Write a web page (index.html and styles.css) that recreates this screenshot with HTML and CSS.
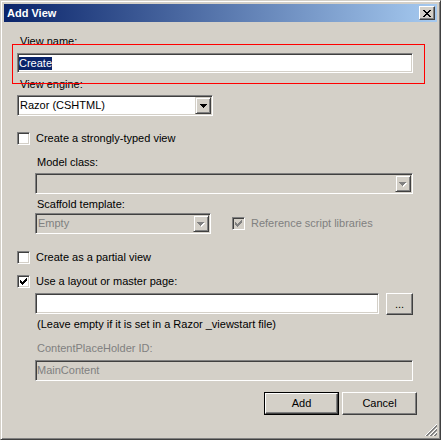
FILE: index.html
```html
<!DOCTYPE html>
<html>
<head>
<meta charset="utf-8">
<title>Add View</title>
<link rel="stylesheet" href="styles.css">
</head>
<body>
<div class="window">
  <div class="titlebar">
    <span class="title">Add View</span>
    <span class="close raised-btn">
      <svg width="8" height="7" viewBox="0 0 8 7" shape-rendering="crispEdges"><path fill="#000" d="M0 0h2v1h-2z M6 0h2v1h-2z M1 1h2v1h-2z M5 1h2v1h-2z M2 2h4v1h-4z M3 3h2v1h-2z M2 4h4v1h-4z M1 5h2v1h-2z M5 5h2v1h-2z M0 6h2v1h-2z M6 6h2v1h-2z"/></svg>
    </span>
  </div>
  <div class="content">
    <div class="lbl lbl-first">View name:</div>
    <div class="field field-name"><span class="sel">Create</span></div>
    <div class="lbl lbl-gap5">View engine:</div>
    <div class="combo combo-engine">
      <span class="combo-text">Razor (CSHTML)</span>
      <span class="drop"><svg width="7" height="4" viewBox="0 0 7 4" shape-rendering="crispEdges"><path fill="#000" d="M0 0h7v1h-7z M1 1h5v1h-5z M2 2h3v1h-3z M3 3h1v1h-1z"/></svg></span>
    </div>
    <div class="check-row row-typed"><span class="cb"></span><span>Create a strongly-typed view</span></div>
    <div class="indent">
      <div class="lbl lbl-model">Model class:</div>
      <div class="combo disabled combo-model">
        <span class="combo-text"></span>
        <span class="drop"><svg width="8" height="5" viewBox="0 0 8 5" shape-rendering="crispEdges"><path fill="#fff" d="M1 1h7v1h-7z M2 2h5v1h-5z M3 3h3v1h-3z M4 4h1v1h-1z"/><path fill="#808080" d="M0 0h7v1h-7z M1 1h5v1h-5z M2 2h3v1h-3z M3 3h1v1h-1z"/></svg></span>
      </div>
      <div class="lbl lbl-scaffold">Scaffold template:</div>
      <div class="scaffold-row">
        <div class="combo disabled combo-scaffold">
          <span class="combo-text">Empty</span>
          <span class="drop"><svg width="8" height="5" viewBox="0 0 8 5" shape-rendering="crispEdges"><path fill="#fff" d="M1 1h7v1h-7z M2 2h5v1h-5z M3 3h3v1h-3z M4 4h1v1h-1z"/><path fill="#808080" d="M0 0h7v1h-7z M1 1h5v1h-5z M2 2h3v1h-3z M3 3h1v1h-1z"/></svg></span>
        </div>
        <div class="check-row disabled"><span class="cb cb-disabled"><svg width="7" height="7" viewBox="0 0 7 7" shape-rendering="crispEdges"><path fill="#808080" d="M6 0h1v1h-1z M5 1h2v1h-2z M0 2h1v1h-1z M4 2h3v1h-3z M0 3h2v1h-2z M3 3h3v1h-3z M0 4h5v1h-5z M1 5h3v1h-3z M2 6h1v1h-1z"/></svg></span><span>Reference script libraries</span></div>
      </div>
    </div>
    <div class="check-row row-partial"><span class="cb"></span><span>Create as a partial view</span></div>
    <div class="check-row row-layout"><span class="cb"><svg width="7" height="7" viewBox="0 0 7 7" shape-rendering="crispEdges"><path fill="#000" d="M6 0h1v1h-1z M5 1h2v1h-2z M0 2h1v1h-1z M4 2h3v1h-3z M0 3h2v1h-2z M3 3h3v1h-3z M0 4h5v1h-5z M1 5h3v1h-3z M2 6h1v1h-1z"/></svg></span><span>Use a layout or master page:</span></div>
    <div class="indent">
      <div class="layout-row">
        <div class="field field-layout"></div>
        <span class="btn btn-browse">...</span>
      </div>
      <div class="lbl lbl-hint">(Leave empty if it is set in a Razor _viewstart file)</div>
      <div class="lbl lbl-cph disabled">ContentPlaceHolder ID:</div>
      <div class="field field-cph disabled">MainContent</div>
    </div>
    <div class="buttons">
      <span class="default-ring"><span class="btn btn-dialog">Add</span></span>
      <span class="btn btn-dialog">Cancel</span>
    </div>
  </div>
  <div class="annot"></div>
  <svg class="grip" width="12" height="12" viewBox="0 0 12 12">
    <g stroke-width="1">
      <line x1="0" y1="12" x2="12" y2="0" stroke="#fff"/>
      <line x1="1" y1="12" x2="12" y2="1" stroke="#808080"/>
      <line x1="2" y1="12" x2="12" y2="2" stroke="#808080"/>
      <line x1="4" y1="12" x2="12" y2="4" stroke="#fff"/>
      <line x1="5" y1="12" x2="12" y2="5" stroke="#808080"/>
      <line x1="6" y1="12" x2="12" y2="6" stroke="#808080"/>
      <line x1="8" y1="12" x2="12" y2="8" stroke="#fff"/>
      <line x1="9" y1="12" x2="12" y2="9" stroke="#808080"/>
      <line x1="10" y1="12" x2="12" y2="10" stroke="#808080"/>
    </g>
  </svg>
</div>
</body>
</html>
```
FILE: styles.css
```css
* { box-sizing: border-box; }
html, body { margin: 0; padding: 0; }
body {
  width: 441px;
  height: 440px;
  overflow: hidden;
  background: #d4d0c8;
  font-family: "Liberation Sans", Arial, sans-serif;
  font-size: 11px;
  color: #000;
}
.window {
  position: relative;
  width: 441px;
  height: 440px;
  background: #d4d0c8;
  border: 1px solid;
  border-color: #d4d0c8 #404040 #404040 #d4d0c8;
  box-shadow: inset 1px 1px 0 #fff, inset -1px -1px 0 #808080;
  padding: 3px;
  display: flex;
  flex-direction: column;
}
.titlebar {
  height: 18px;
  display: flex;
  align-items: center;
  justify-content: space-between;
  padding: 0 2px 0 3px;
  background: linear-gradient(to right, #0a246a, #a6caf0);
}
.title {
  color: #fff;
  font-weight: bold;
  font-size: 11px;
  line-height: 13px;
}
.raised-btn {
  background: #d4d0c8;
  border: 1px solid;
  border-color: #fff #404040 #404040 #fff;
  box-shadow: inset -1px -1px 0 #808080;
}
.close {
  width: 16px;
  height: 14px;
  display: flex;
  align-items: center;
  justify-content: center;
  padding-right: 1px;
}
.content {
  padding: 13px 20px 0 13px;
  display: flex;
  flex-direction: column;
  align-items: flex-start;
}
.lbl {
  line-height: 13px;
  padding-left: 3px;
  white-space: nowrap;
}
.indent .lbl { padding-left: 2px; }
.lbl-gap5 { margin-top: 5px; }
.disabled { color: #808080; }

.field {
  height: 21px;
  background: #fff;
  border: 1px solid;
  border-color: #808080 #fff #fff #808080;
  box-shadow: inset 1px 1px 0 #404040, inset -1px -1px 0 #d4d0c8;
  padding: 1px;
  display: flex;
  align-items: center;
  line-height: 13px;
  white-space: nowrap;
}
.field-name { width: 396px; height: 20px; margin-top: 5px; }
.sel {
  background: #0a246a;
  color: #fff;
  line-height: 13px;
}
.combo {
  height: 21px;
  display: flex;
  background: #fff;
  border: 1px solid;
  border-color: #808080 #fff #fff #808080;
  box-shadow: inset 1px 1px 0 #404040, inset -1px -1px 0 #d4d0c8;
  padding: 1px;
}
.combo.disabled { background: #d4d0c8; }
.combo-text {
  flex: 1;
  padding-left: 1px;
  line-height: 17px;
  white-space: nowrap;
}
.drop {
  width: 16px;
  height: 17px;
  background: #d4d0c8;
  border: 1px solid;
  border-color: #d4d0c8 #404040 #404040 #d4d0c8;
  box-shadow: inset 1px 1px 0 #fff, inset -1px -1px 0 #808080;
  display: flex;
  align-items: center;
  justify-content: center;
  padding-top: 1px;
}
.combo-engine { width: 196px; margin-top: 4px; }
.combo-model { width: 378px; margin-top: 4px; }
.combo-scaffold { width: 176px; }

.check-row {
  display: flex;
  align-items: center;
  gap: 6px;
  line-height: 13px;
  white-space: nowrap;
}
.cb {
  width: 13px;
  height: 13px;
  flex: none;
  background: #fff;
  border: 1px solid;
  border-color: #808080 #fff #fff #808080;
  box-shadow: inset 1px 1px 0 #404040, inset -1px -1px 0 #d4d0c8;
  display: flex;
  align-items: center;
  justify-content: center;
}
.cb-disabled { background: #d4d0c8; }
.row-typed { margin-top: 16px; }
.row-partial { margin-top: 17px; }
.row-layout { margin-top: 11px; }

.indent {
  padding-left: 18px;
  display: flex;
  flex-direction: column;
  align-items: flex-start;
}
.lbl-model { margin-top: 11px; }
.lbl-scaffold { margin-top: 4px; }
.scaffold-row {
  margin-top: 2px;
  display: flex;
  align-items: center;
  gap: 21px;
}
.layout-row {
  margin-top: 5px;
  display: flex;
  align-items: flex-start;
  gap: 7px;
}
.field-layout { width: 344px; }
.btn {
  display: flex;
  align-items: center;
  justify-content: center;
  background: #d4d0c8;
  border: 1px solid;
  border-color: #fff #404040 #404040 #fff;
  box-shadow: inset -1px -1px 0 #808080;
  line-height: 13px;
}
.btn-browse { width: 27px; height: 22px; }
.lbl-hint { margin-top: 3px; }
.lbl-cph { margin-top: 11px; }
.field-cph {
  width: 378px;
  margin-top: 5px;
  background: #d4d0c8;
}
.buttons {
  align-self: stretch;
  margin-top: 11px;
  display: flex;
  justify-content: flex-end;
  gap: 3px;
}
.btn-dialog { width: 75px; height: 23px; }
.default-ring {
  display: flex;
  border: 1px solid #000;
}
.default-ring .btn-dialog { width: 73px; height: 21px; }
.annot {
  position: absolute;
  left: 11px;
  top: 43px;
  width: 413px;
  height: 40px;
  border: 1px solid #ff0000;
}
.grip {
  position: absolute;
  right: 3px;
  bottom: 3px;
}
```
